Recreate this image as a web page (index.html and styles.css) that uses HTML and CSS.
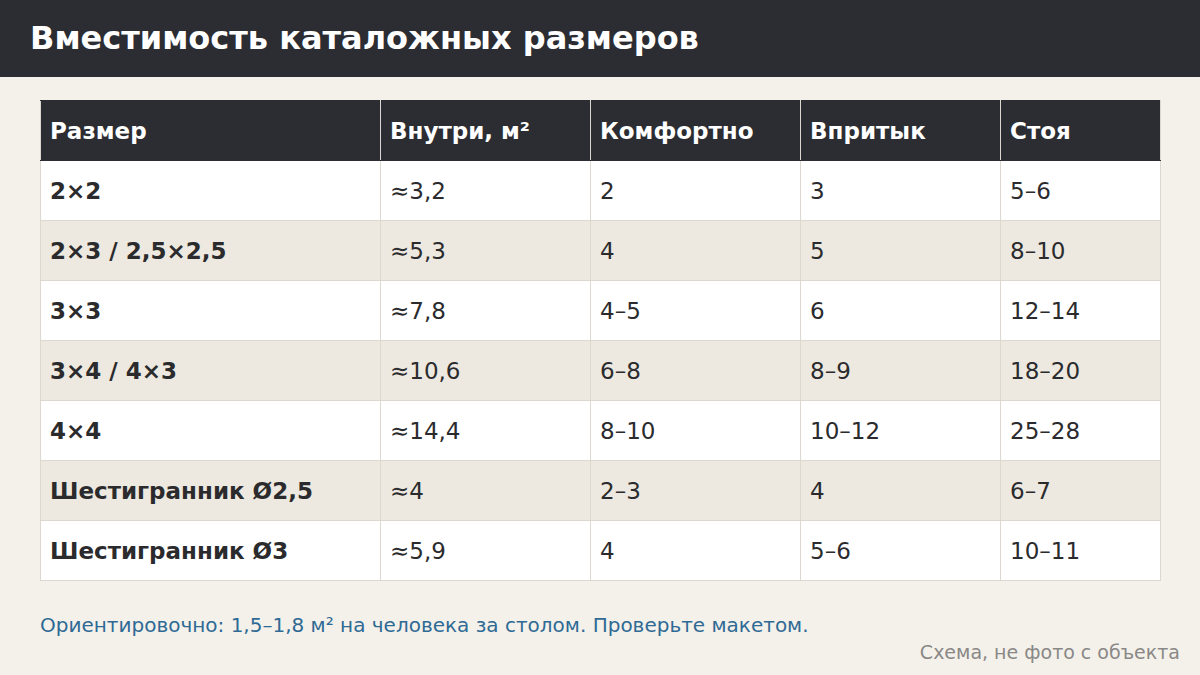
FILE: index.html
```html
<!DOCTYPE html>
<html lang="ru">
<head>
<meta charset="utf-8">
<link rel="stylesheet" href="styles.css">
</head>
<body>
<header class="topbar"><h1 class="title">Вместимость каталожных размеров</h1></header>
<main class="content">
<table class="cap">
<colgroup><col class="c1"><col class="c2"><col class="c3"><col class="c4"><col class="c5"></colgroup>
<thead>
<tr><th>Размер</th><th>Внутри, м²</th><th>Комфортно</th><th>Впритык</th><th>Стоя</th></tr>
</thead>
<tbody>
<tr><td class="sz">2×2</td><td>≈3,2</td><td>2</td><td>3</td><td>5–6</td></tr>
<tr><td class="sz">2×3 / 2,5×2,5</td><td>≈5,3</td><td>4</td><td>5</td><td>8–10</td></tr>
<tr><td class="sz">3×3</td><td>≈7,8</td><td>4–5</td><td>6</td><td>12–14</td></tr>
<tr><td class="sz">3×4 / 4×3</td><td>≈10,6</td><td>6–8</td><td>8–9</td><td>18–20</td></tr>
<tr><td class="sz">4×4</td><td>≈14,4</td><td>8–10</td><td>10–12</td><td>25–28</td></tr>
<tr><td class="sz">Шестигранник Ø2,5</td><td>≈4</td><td>2–3</td><td>4</td><td>6–7</td></tr>
<tr><td class="sz">Шестигранник Ø3</td><td>≈5,9</td><td>4</td><td>5–6</td><td>10–11</td></tr>
</tbody>
</table>
<p class="note">Ориентировочно: 1,5–1,8 м² на человека за столом. Проверьте макетом.</p>
<p class="credit">Схема, не фото с объекта</p>
</main>
</body>
</html>
```

FILE: styles.css
```css
html, body {
  margin: 0;
  padding: 0;
}
body {
  width: 1200px;
  height: 675px;
  overflow: hidden;
  background: #f4f1eb;
  font-family: "DejaVu Sans", "Noto Sans", sans-serif;
  color: #2b2b2d;
}
.topbar {
  height: 77px;
  background: #2b2d32;
  display: flex;
  align-items: center;
  padding: 0 30px;
  box-sizing: border-box;
}
.title {
  margin: 0;
  color: #ffffff;
  font-size: 32px;
  font-weight: bold;
  line-height: 1;
  padding-bottom: 1px;
}
.content {
  padding: 23px 40px 0 40px;
}
.cap {
  width: 1120px;
  border-collapse: collapse;
  table-layout: fixed;
  font-size: 23px;
}
.c1 { width: 340px; }
.c2 { width: 210px; }
.c3 { width: 210px; }
.c4 { width: 200px; }
.c5 { width: 160px; }
.cap th, .cap td {
  height: 60px;
  padding: 0 9px;
  text-align: left;
  vertical-align: middle;
  box-sizing: border-box;
  border: 1px solid #dcd8d0;
  white-space: nowrap;
}
.cap th {
  background: #2b2d32;
  color: #ffffff;
  font-weight: bold;
  border-color: #2b2d32 #dcd8d0;
}
.cap th:first-child { border-left-color: #dcd8d0; }
.cap td { background: #ffffff; }
.cap tbody tr:nth-child(even) td { background: #ede9e0; }
.cap td.sz { font-weight: bold; }
.note {
  margin: 32px 0 0 0;
  font-size: 20px;
  line-height: 24px;
  color: #2f6a94;
}
.credit {
  margin: 4px -20px 0 0;
  text-align: right;
  font-size: 19px;
  line-height: 22px;
  color: #8a8886;
}
```
